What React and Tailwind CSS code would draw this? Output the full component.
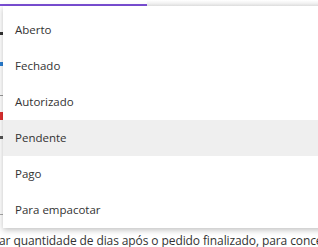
export default function App() {
  const items = ["Aberto", "Fechado", "Autorizado", "Pendente", "Pago", "Para empacotar"];
  return (
    <div className="relative w-[318px] h-[247px] overflow-hidden bg-white" style={{ fontFamily: '"Open Sans", "Noto Sans", sans-serif' }}>
      {/* underlying page */}
      <div className="flex flex-col h-full">
        <div className="flex h-[6px]">
          <div className="w-[147px] h-[6px] bg-white border-b-2 border-[#7b4fd6]"></div>
          <div className="flex-1 h-[6px] bg-gradient-to-b from-white to-[#ececec]"></div>
        </div>
        <div className="flex-1 flex flex-col w-[3px]">
          <div className="h-[26px]"></div>
          <div className="h-[3px] bg-[#333]"></div>
          <div className="h-[27px]"></div>
          <div className="h-[4px] bg-[#2a7fd4]"></div>
          <div className="h-[29px]"></div>
          <div className="h-px bg-[#999]"></div>
          <div className="h-[16px]"></div>
          <div className="h-[8px] bg-[#e03030]"></div>
          <div className="h-[16px]"></div>
          <div className="h-[3px] bg-[#555]"></div>
          <div className="h-[75px]"></div>
          <div className="h-px bg-[#aaa]"></div>
        </div>
        <div className="h-[19px] pt-[2px] whitespace-nowrap text-[12px] leading-[16px] text-[#333] -ml-[1px] -mb-[3px] tracking-[-0.1px]">
          ar quantidade de dias após o pedido finalizado, para conceder
        </div>
      </div>
      {/* dropdown menu */}
      <div className="absolute left-[3px] top-[6px] w-[330px] h-[222px] bg-white pt-[6px] shadow-[0_2px_6px_rgba(0,0,0,0.25)]">
        {items.map((t) => (
          <div
            key={t}
            className={`h-[36px] flex items-center pl-[12px] text-[11.5px] text-[#333] ${t === "Pendente" ? "bg-[#efefef]" : ""}`}
          >
            {t}
          </div>
        ))}
      </div>
    </div>
  );
}
